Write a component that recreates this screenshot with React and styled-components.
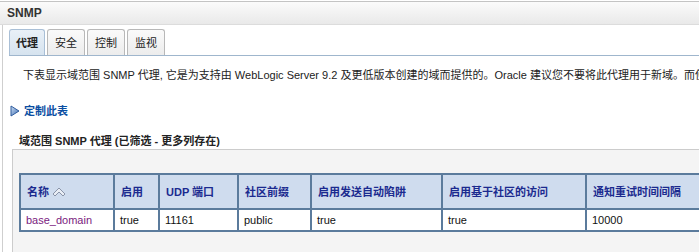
import React from "react";
import styled, { createGlobalStyle } from "styled-components";

const Global = createGlobalStyle`
  html, body { margin: 0; padding: 0; background: #fff; }
  body { font-family: "Liberation Sans", "Noto Sans CJK SC", sans-serif; font-size: 11px; line-height: 14px; color: #000; overflow: hidden; }
`;

const Page = styled.div`
  width: 699px;
  height: 252px;
  overflow: hidden;
`;

const TitleBar = styled.div`
  margin-top: 1px;
  height: 22px;
  border-top: 1px solid #c4c4c4;
  border-bottom: 1px solid #dcdcdc;
  background: linear-gradient(#fbfbfb, #e9e9e9);
  display: flex;
  align-items: center;
  padding-left: 7px;
  font-weight: bold;
  font-size: 12px;
  color: #333;
`;

const Body = styled.div`
  margin-left: 2px;
  border-left: 1px solid #cfcfcf;
  padding: 4px 0 0 6px;
  height: 240px;
`;

const Tabs = styled.div`
  display: flex;
  gap: 2px;
  border-bottom: 1px solid #9fb6cd;
  height: 26px;
  align-items: flex-end;
`;

const Tab = styled.div`
  height: 25px;
  padding: 0 ${p => (p.$active ? 6 : 7)}px;
  display: flex;
  align-items: center;
  border: 1px solid ${p => (p.$active ? "#a9bfd6" : "#b8b8b8")};
  border-bottom: none;
  border-radius: 3px 3px 0 0;
  background: ${p => (p.$active ? "linear-gradient(#e9f0f7, #d6e3ef)" : "linear-gradient(#fafafa, #ececec)")};
  font-weight: ${p => (p.$active ? "bold" : "normal")};
  color: #222;
  font-size: 11px;
`;

const Desc = styled.p`
  margin: 12px 0 0 14px;
  white-space: nowrap;
  font-size: 11px;
  line-height: 14px;
  height: 14px;
  color: #222;
`;

const Customize = styled.div`
  margin: 22px 0 0 1px;
  display: flex;
  align-items: center;
  gap: 4px;
  height: 14px;
  line-height: 14px;
  font-weight: bold;
  color: #0b4ea2;
  font-size: 11px;
`;

const SectionTitle = styled.div`
  margin: 16px 0 0 10px;
  font-weight: bold;
  font-size: 11px;
  color: #222;
  height: 14px;
  line-height: 14px;
`;

const Panel = styled.div`
  margin: 1px 0 0 3px;
  border-top: 1px solid #cccccc;
  border-left: 1px solid #cccccc;
  background: #f4f4f4;
  padding: 23px 0 0 6px;
  height: 200px;
`;

const Table = styled.table`
  border-collapse: collapse;
  table-layout: fixed;
  width: 826px;
`;

const Th = styled.th`
  background: #cfdcee;
  border: 2px solid #5b7b9c;
  height: 35px;
  box-sizing: border-box;
  padding: 0 0 0 6px;
  text-align: left;
  color: #1b2a8f;
  font-weight: bold;
  font-size: 11px;
  line-height: 14px;
  white-space: nowrap;
  overflow: hidden;
`;

const Td = styled.td`
  background: #fff;
  border: 2px solid #5b7b9c;
  border-top: none;
  height: 22px;
  box-sizing: border-box;
  padding: 0 0 0 5px;
  font-size: 11px;
  line-height: 14px;
  color: ${p => (p.$link ? "#7a1a7e" : "#111")};
  white-space: nowrap;
`;

const Sort = () => (
  <svg width="14" height="10" viewBox="0 0 14 10" style={{ marginLeft: 3, verticalAlign: "-1px" }}>
    <path d="M1 7 L7 1 L13 7 L11 9 L7 5 L3 9 Z" fill="#e8edf5" stroke="#8a94a8" strokeWidth="1" strokeLinejoin="round" />
  </svg>
);

const Arrow = () => (
  <svg width="10" height="12" viewBox="0 0 10 12">
    <defs>
      <linearGradient id="ag" x1="0" y1="0" x2="1" y2="1">
        <stop offset="0" stopColor="#cfe0f5" />
        <stop offset="1" stopColor="#3b6bb0" />
      </linearGradient>
    </defs>
    <path d="M1 1 L9 6 L1 11 Z" fill="url(#ag)" stroke="#2f5c9e" strokeWidth="1" />
  </svg>
);

const cols = [94, 45, 79, 73, 131, 144, 160, 100];

export default function App() {
  return (
    <Page>
      <Global />
      <TitleBar>SNMP</TitleBar>
      <Body>
        <Tabs>
          <Tab $active>代理</Tab>
          <Tab>安全</Tab>
          <Tab>控制</Tab>
          <Tab>监视</Tab>
        </Tabs>
        <Desc>
          下表显示域范围 SNMP 代理, 它是为支持由 WebLogic Server 9.2 及更低版本创建的域而提供的。Oracle 建议您不要将此代理用于新域。而使用服务器 SNMP 代理。
        </Desc>
        <Customize>
          <Arrow />
          定制此表
        </Customize>
        <SectionTitle>域范围 SNMP 代理 (已筛选 - 更多列存在)</SectionTitle>
        <Panel>
          <Table>
            <colgroup>
              {cols.map((w, i) => (
                <col key={i} style={{ width: w }} />
              ))}
            </colgroup>
            <thead>
              <tr>
                <Th>名称<Sort /></Th>
                <Th>启用</Th>
                <Th>UDP 端口</Th>
                <Th>社区前缀</Th>
                <Th>启用发送自动陷阱</Th>
                <Th>启用基于社区的访问</Th>
                <Th>通知重试时间间隔</Th>
                <Th>通知重试次数</Th>
              </tr>
            </thead>
            <tbody>
              <tr>
                <Td $link>base_domain</Td>
                <Td>true</Td>
                <Td>11161</Td>
                <Td>public</Td>
                <Td>true</Td>
                <Td>true</Td>
                <Td>10000</Td>
                <Td>1</Td>
              </tr>
            </tbody>
          </Table>
        </Panel>
      </Body>
    </Page>
  );
}
